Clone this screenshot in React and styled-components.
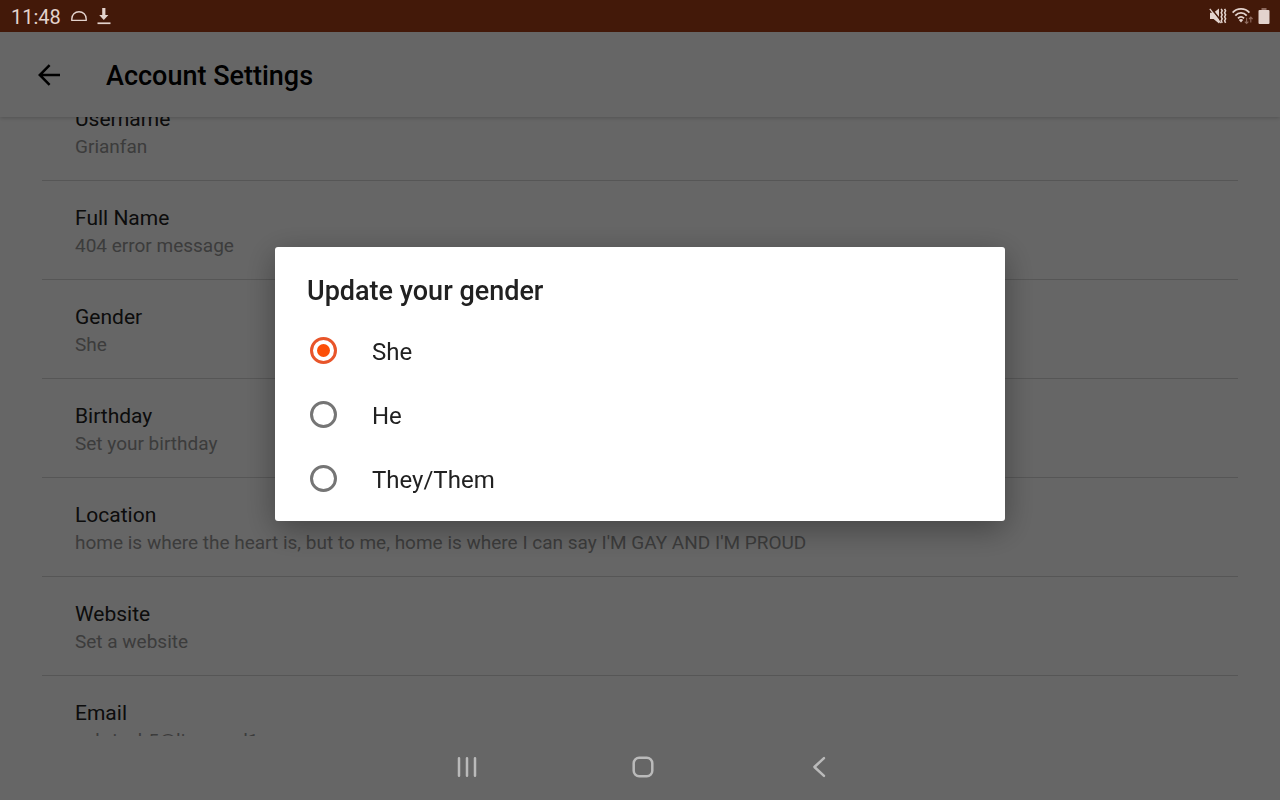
import { useLayoutEffect, useRef, useState } from "react";
import styled, { createGlobalStyle } from "styled-components";

const settings = [
  { name: "Username", value: "Grianfan" },
  { name: "Full Name", value: "404 error message" },
  { name: "Gender", value: "She" },
  { name: "Birthday", value: "Set your birthday" },
  {
    name: "Location",
    value:
      "home is where the heart is, but to me, home is where I can say I'M GAY AND I'M PROUD",
  },
  { name: "Website", value: "Set a website" },
  { name: "Email", value: "subrianh5@liverpool1" },
];

const genders = ["She", "He", "They/Them"];

const StatusBar = () => (
  <StatusContainer>
    <StatusGroup gap="10px">
      <Clock>11:48</Clock>
      <svg width="16" height="12" viewBox="0 0 16 12" fill="none">
        <path
          d="M0.8 10.4V9C0.8 4.8 3.9 1.8 8 1.8S15.2 4.8 15.2 9v1.4Z"
          stroke="currentColor"
          strokeWidth="1.4"
          strokeLinejoin="round"
        />
      </svg>
      <svg width="14" height="18" viewBox="0 0 14 18" fill="currentColor">
        <path d="M5.2 1h3.2v7h3L6.8 13 2.2 8h3Z" />
        <path d="M0.5 15.4h13v1.7H0.5Z" />
      </svg>
    </StatusGroup>
    <StatusGroup gap="5px">
      <svg width="18" height="18" viewBox="0 0 18 18" fill="none">
        <path d="M1 5.8h3.6L10 1.6v14.8L4.6 12H1Z" fill="currentColor" />
        <path d="M1.2 0.2 12 13.8" stroke="#431909" strokeWidth="1.6" />
        <path d="M0.8 1.8 11.6 16" stroke="currentColor" strokeWidth="1.3" />
        <path
          d="m12.2 1.8 1 2-1 2 1 2-1 2 1 2-1 2 1 2M15.6 1.8l1 2-1 2 1 2-1 2 1 2-1 2 1 2"
          stroke="currentColor"
          strokeWidth="1.5"
        />
      </svg>
      <svg width="21" height="18" viewBox="0 0 21 18" fill="none">
        <g stroke="currentColor" strokeWidth="1.8">
          <path d="M0.6 5.6C5 .6 13 .6 17.4 5.6" />
          <path d="M3.3 8.6C6.6 5 11.4 5 14.7 8.6" />
          <path d="M6 11.4c1.8-2 4.2-2 6 0" />
        </g>
        <path d="m9 15.6-2.2-2.5a3.1 3.1 0 0 1 4.4 0Z" fill="currentColor" />
        <path
          d="M14.6 10.8v5.6M12.8 14.6l1.8 1.9 1.8-1.9M18.8 15.6V10M17 12l1.8-1.9 1.8 1.9"
          stroke="#8e6a5e"
          strokeWidth="1.1"
        />
      </svg>
      <svg width="12" height="18" viewBox="0 0 12 18">
        <path d="M3.5 1h5v2.5h-5Z" fill="#8e6a5e" />
        <rect x="0.5" y="3" width="11" height="14" rx="1" fill="currentColor" />
      </svg>
    </StatusGroup>
  </StatusContainer>
);

const GenderDialog = () => {
  const [gender, setGender] = useState("She");

  return (
    <Scrim>
      <Dialog role="dialog" aria-modal="true" aria-labelledby="gender-title">
        <DialogTitle id="gender-title">Update your gender</DialogTitle>
        {genders.map((item) => (
          <Option key={item}>
            <Radio
              type="radio"
              name="gender"
              value={item}
              checked={gender === item}
              onChange={() => setGender(item)}
            />
            {item}
          </Option>
        ))}
      </Dialog>
    </Scrim>
  );
};

const NavBar = () => (
  <NavContainer>
    <NavBtn aria-label="Recent apps">
      <svg width="24" height="24" viewBox="0 0 24 24" fill="none">
        <path
          d="M4 3.2v17.6M12 3.2v17.6M20 3.2v17.6"
          stroke="currentColor"
          strokeWidth="2.5"
          strokeLinecap="round"
        />
      </svg>
    </NavBtn>
    <NavBtn aria-label="Home">
      <svg width="24" height="24" viewBox="0 0 24 24" fill="none">
        <rect
          x="2.7"
          y="2.7"
          width="18.6"
          height="18.6"
          rx="5.5"
          stroke="currentColor"
          strokeWidth="2.5"
        />
      </svg>
    </NavBtn>
    <NavBtn aria-label="Back">
      <svg width="24" height="24" viewBox="0 0 24 24" fill="none">
        <path
          d="M17 3.2 7.4 12l9.6 8.8"
          stroke="currentColor"
          strokeWidth="2.5"
          strokeLinecap="round"
          strokeLinejoin="round"
        />
      </svg>
    </NavBtn>
  </NavContainer>
);

export default function App() {
  const listRef = useRef(null);

  useLayoutEffect(() => {
    listRef.current.scrollTop = 35;
  }, []);

  return (
    <Screen>
      <GlobalStyle />
      <StatusBar />
      <Header>
        <BackBtn aria-label="Go back">
          <svg width="24" height="24" viewBox="0 0 24 24" fill="none">
            <path
              d="M23 12H3.2M12.6 2.2 2.8 12l9.8 9.8"
              stroke="currentColor"
              strokeWidth="2.5"
            />
          </svg>
        </BackBtn>
        <PageTitle>Account Settings</PageTitle>
      </Header>
      <SettingList ref={listRef}>
        {settings.map((item) => (
          <SettingItem key={item.name}>
            <SettingName>{item.name}</SettingName>
            <SettingValue>{item.value}</SettingValue>
          </SettingItem>
        ))}
      </SettingList>
      <NavBar />
      <GenderDialog />
    </Screen>
  );
}

const GlobalStyle = createGlobalStyle`
  * {
    box-sizing: border-box;
  }

  body {
    margin: 0;
    background-color: #fff;
    font-family: Roboto, sans-serif;
  }

  svg {
    display: block;
  }
`;

const Screen = styled.div`
  display: flex;
  flex-direction: column;
  height: 100vh;
`;

const StatusContainer = styled.div`
  position: relative;
  z-index: 3;
  display: flex;
  flex-shrink: 0;
  justify-content: space-between;
  align-items: center;
  height: 32px;
  padding: 0 10px 0 11px;
  background-color: #431909;
  color: #e3d3cd;
`;

const StatusGroup = styled.div`
  display: flex;
  align-items: center;
  gap: ${({ gap }) => gap};
`;

const Clock = styled.span`
  padding-top: 2px;
  font-size: 20px;
  line-height: 30px;
`;

const Header = styled.header`
  position: relative;
  z-index: 1;
  display: flex;
  flex-shrink: 0;
  align-items: center;
  height: 85px;
  padding: 0 37px;
  gap: 45px;
  background-color: #fff;
  box-shadow: 0 1px 4px rgba(0, 0, 0, 0.2);
`;

const BackBtn = styled.button`
  padding: 0;
  border: none;
  background-color: transparent;
  color: #000;
  cursor: pointer;
`;

const PageTitle = styled.h1`
  margin: 0;
  padding-top: 2px;
  font-size: 27px;
  font-weight: 500;
  line-height: 32px;
`;

const SettingList = styled.ul`
  flex: 1;
  min-height: 0;
  margin: 0;
  padding: 0 42px;
  overflow-y: auto;
  scrollbar-width: none;
  list-style: none;
`;

const SettingItem = styled.li`
  height: 99px;
  padding: 23px 33px 0;
  border-bottom: 1px solid #d8d8d8;
`;

const SettingName = styled.div`
  color: #212121;
  font-size: 21px;
  line-height: 28px;
`;

const SettingValue = styled.div`
  color: #969696;
  font-size: 19px;
  line-height: 28px;
`;

const NavContainer = styled.nav`
  position: relative;
  z-index: 3;
  display: flex;
  flex-shrink: 0;
  justify-content: center;
  align-items: center;
  gap: 152px;
  height: 64px;
  padding: 0 0 3px 5px;
  color: #bababa;
`;

const NavBtn = styled.button`
  padding: 0;
  border: none;
  background-color: transparent;
  color: inherit;
  cursor: pointer;
`;

const Scrim = styled.div`
  position: fixed;
  inset: 0;
  z-index: 2;
  display: flex;
  justify-content: center;
  align-items: center;
  padding: 32px 16px 64px;
  background-color: rgba(0, 0, 0, 0.6);
`;

const Dialog = styled.div`
  width: 100%;
  max-width: 730px;
  padding: 24px 32px 9px;
  border-radius: 3px;
  background-color: #fff;
  box-shadow: 0 8px 32px rgba(0, 0, 0, 0.35);
`;

const DialogTitle = styled.h2`
  margin: 0 0 9px;
  color: #212121;
  font-size: 27px;
  font-weight: 500;
  line-height: 40px;
`;

const Option = styled.label`
  display: flex;
  align-items: center;
  gap: 35px;
  height: 64px;
  padding-left: 3px;
  color: #212121;
  font-size: 24px;
  cursor: pointer;
`;

const Radio = styled.input`
  display: grid;
  place-items: center;
  flex-shrink: 0;
  width: 27px;
  height: 27px;
  margin: 0 0 3px;
  border: 3px solid #757575;
  border-radius: 50%;
  appearance: none;
  cursor: pointer;

  &:checked {
    border-color: #e8552a;
  }

  &:checked::before {
    content: "";
    width: 13px;
    height: 13px;
    border-radius: 50%;
    background-color: #fc4f08;
  }
`;
